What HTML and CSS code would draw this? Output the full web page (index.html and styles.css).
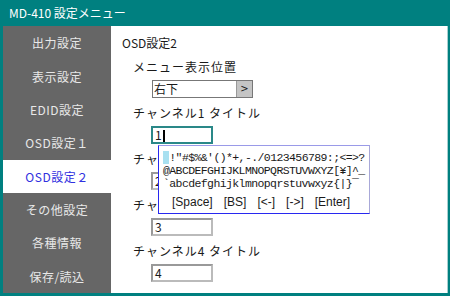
FILE: index.html
```html
<!DOCTYPE html>
<html lang="ja">
<head>
    <meta charset="UTF-8">
    <meta name="viewport" content="width=device-width, initial-scale=1.0">
    <title>MD-410 設定メニュー</title>
    <link rel="stylesheet" href="styles.css">
</head>
<body>
    <div class="window">
        <div class="titlebar">MD-410 設定メニュー</div>
        <div class="main">
            <ul class="sidebar">
                <li>出力設定</li>
                <li>表示設定</li>
                <li>EDID設定</li>
                <li>OSD設定１</li>
                <li class="active">OSD設定２</li>
                <li>その他設定</li>
                <li>各種情報</li>
                <li>保存/読込</li>
            </ul>
            <div class="content">
                <div class="heading">OSD設定2</div>

                <div class="label">メニュー表示位置</div>
                <div class="select">
                    <span class="select-value">右下</span>
                    <span class="select-btn">&gt;</span>
                </div>

                <div class="label">チャンネル1 タイトル</div>
                <div class="field focused">1<span class="caret"></span></div>

                <div class="label">チャンネル2 タイトル</div>
                <div class="field">2</div>

                <div class="label">チャンネル3 タイトル</div>
                <div class="field">3</div>

                <div class="label">チャンネル4 タイトル</div>
                <div class="field">4</div>

                <div class="charpad">
                    <div class="chars"><span class="cur"> </span>!"#$%&amp;'()*+,-./0123456789:;&lt;=&gt;?</div>
                    <div class="chars">@ABCDEFGHIJKLMNOPQRSTUVWXYZ[¥]^_</div>
                    <div class="chars">`abcdefghijklmnopqrstuvwxyz{|}‾</div>
                    <div class="keys">
                        <span>[Space]</span>
                        <span>[BS]</span>
                        <span>[&lt;-]</span>
                        <span>[-&gt;]</span>
                        <span>[Enter]</span>
                    </div>
                </div>
            </div>
        </div>
    </div>
</body>
</html>
```

FILE: styles.css
```css
body {
    margin: 0;
    padding: 0;
    font-family: "Noto Sans CJK JP", "DejaVu Sans", sans-serif;
    font-size: 12px;
}
.window {
    width: 450px;
    height: 296px;
    background: #008080;
    display: flex;
    flex-direction: column;
}
.titlebar {
    height: 26px;
    line-height: 26px;
    padding-left: 9px;
    color: #fff;
    font-size: 12px;
}
.main {
    flex: 1;
    display: flex;
    margin: 0 2px 3px 3px;
}
.sidebar {
    list-style: none;
    margin: 0;
    padding: 0;
    width: 108px;
    background: #666;
    display: flex;
    flex-direction: column;
}
.sidebar li {
    flex: 1;
    display: flex;
    align-items: center;
    justify-content: center;
    color: #e8e8e8;
    font-size: 12px;
    letter-spacing: 0.5px;
}
.sidebar li.active {
    background: #fff;
    color: #3030e0;
}
.content {
    flex: 1;
    position: relative;
    background: #fff;
    border-right: 1px solid #a8d0d0;
    padding: 0 0 0 11px;
    color: #1a1a1a;
}
.heading {
    margin-top: 7px;
    line-height: 20px;
}
.label {
    margin-top: 4px;
    margin-left: 11px;
    line-height: 20px;
    letter-spacing: 1px;
}
.field, .select {
    box-sizing: border-box;
    margin: 3px 0 5px 29px;
    height: 18px;
    border: 2px solid #999;
    border-right-color: #bbb;
    border-bottom-color: #bbb;
    line-height: 14px;
    padding-left: 2px;
}
.field {
    width: 62px;
}
.field + .label {
    margin-top: 0;
}
.field.focused {
    border-color: #2a8888;
}
.caret {
    display: inline-block;
    width: 2px;
    height: 12px;
    background: #000;
    vertical-align: -2px;
    margin-left: 1px;
}
.select {
    width: 101px;
    margin-left: 30px;
    display: flex;
    padding-left: 1px;
    border-width: 1px;
    border-color: #777;
}
.select + .label {
    margin-top: 1px;
}
.select-value {
    flex: 1;
    line-height: 16px;
}
.select-btn {
    width: 15px;
    background: #c4c4c4;
    border-left: 1px solid #999;
    text-align: center;
    line-height: 16px;
    font-family: "DejaVu Sans", sans-serif;
    font-size: 10px;
}
.charpad {
    position: absolute;
    left: 47px;
    top: 119px;
    width: 212px;
    height: 69px;
    background: #fff;
    border: 1px solid #2828f0;
    border-top-color: #9a9ae8;
    border-right-color: #a8a8d8;
    padding: 5px 0 0 4px;
    box-sizing: border-box;
}
.chars {
    font-family: "Liberation Mono", monospace;
    font-size: 11.5px;
    line-height: 13px;
    white-space: pre;
    letter-spacing: -0.6px;
}
.cur {
    background: #a8e0f0;
}
.keys {
    margin-top: 5px;
    padding-left: 9px;
    display: flex;
    gap: 11px;
    font-family: "Liberation Sans", sans-serif;
    font-size: 12px;
    line-height: 14px;
}
```
